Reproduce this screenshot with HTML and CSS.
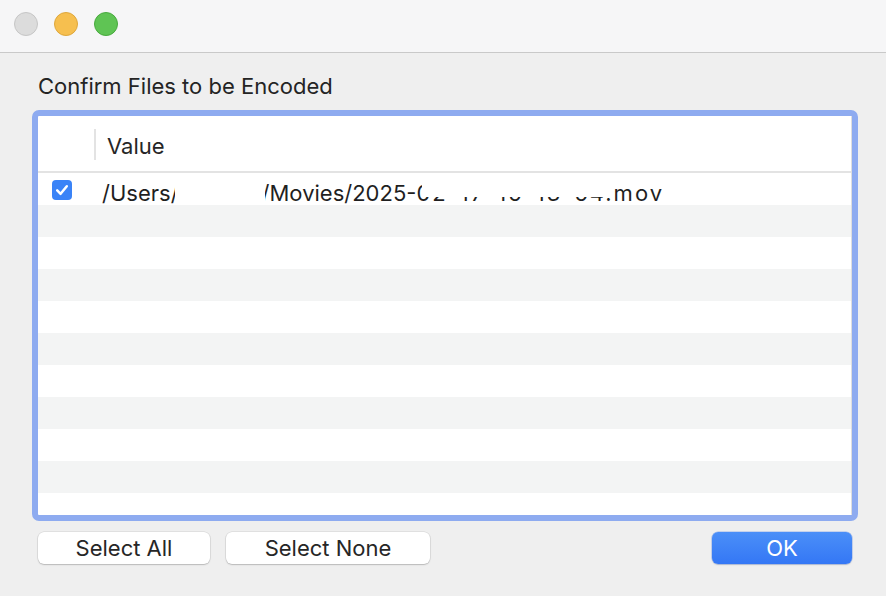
FILE: index.html
```html
<!DOCTYPE html>
<html lang="en">
<head>
<meta charset="utf-8">
<title>Confirm Files to be Encoded</title>
<link rel="stylesheet" href="styles.css">
</head>
<body>
<div class="window">
  <header class="titlebar">
    <span class="light light-close"></span>
    <span class="light light-min"></span>
    <span class="light light-max"></span>
  </header>
  <main class="content">
    <h1 class="heading">Confirm Files to be Encoded</h1>
    <div class="table-frame">
      <div class="table">
        <div class="table-head">
          <div class="head-check"></div>
          <div class="head-value">Value</div>
        </div>
        <div class="rows">
          <div class="row">
            <div class="cell-check">
              <svg class="checkbox" width="20" height="20" viewBox="0 0 20 20">
                <rect x="0" y="0" width="20" height="20" rx="4" fill="#3a83f7"/>
                <path d="M5.2 10.4 L8.6 13.8 L14.8 6.2" fill="none" stroke="#fff" stroke-width="2.5" stroke-linecap="round" stroke-linejoin="round"/>
              </svg>
            </div>
            <div class="cell-value">
              <span class="path">/Users/<span class="user"></span>/Movies/2025-<span class="stamp">02-17-15-13-54</span><span class="ext">.mov</span></span>
              <span class="mask mask-user"></span>
              <span class="mask mask-date"></span>
            </div>
          </div>
          <div class="row"></div>
          <div class="row"></div>
          <div class="row"></div>
          <div class="row"></div>
          <div class="row"></div>
          <div class="row"></div>
          <div class="row"></div>
          <div class="row"></div>
          <div class="row"></div>
          <div class="row"></div>
        </div>
      </div>
    </div>
    <div class="buttons">
      <button class="btn">Select All</button>
      <button class="btn btn-none">Select None</button>
      <button class="btn btn-ok">OK</button>
    </div>
  </main>
</div>
</body>
</html>
```
FILE: styles.css
```css
* { box-sizing: border-box; }
html, body {
  margin: 0;
  padding: 0;
  width: 886px;
  height: 596px;
  overflow: hidden;
  background: #efefef;
  font-family: Inter, "Liberation Sans", sans-serif;
  color: #262626;
}
.window {
  width: 886px;
  height: 596px;
  display: flex;
  flex-direction: column;
}
.titlebar {
  height: 53px;
  background: #f6f6f7;
  border-bottom: 1px solid #c9c9c9;
  display: flex;
  align-items: flex-start;
  gap: 16px;
  padding: 12px 0 0 14px;
  flex: none;
}
.light {
  width: 24px;
  height: 24px;
  border-radius: 50%;
  display: block;
}
.light-close { background: #dcdcdc; border: 1px solid #c6c6c6; }
.light-min { background: #f6bf4f; border: 1px solid #dea73c; }
.light-max { background: #5fc454; border: 1px solid #48aa3e; }
.content {
  flex: 1;
  padding: 0 28px 0 32px;
  display: flex;
  flex-direction: column;
}
.heading {
  margin: 20px 0 0 6px;
  font-size: 22px;
  font-weight: 400;
  line-height: 26px;
  height: 37px;
  color: #242424;
}
.table-frame {
  width: 826px;
  height: 411px;
  border: 6px solid #8eabf0;
  border-radius: 7px;
  background: #fff;
  overflow: hidden;
}
.table {
  height: 100%;
  border-right: 1px solid #dedede;
  display: flex;
  flex-direction: column;
  overflow: hidden;
}
.table-head {
  height: 57px;
  flex: none;
  border-bottom: 2px solid #e3e3e3;
  display: flex;
  align-items: center;
}
.head-check {
  width: 58px;
  height: 31px;
  border-right: 2px solid #e3e3e3;
  margin-top: 2px;
}
.head-value {
  padding-left: 11px;
  font-size: 22px;
  line-height: 26px;
  margin-top: 4px;
}
.rows { flex: 1; overflow: hidden; }
.row {
  height: 32px;
  display: flex;
  overflow: hidden;
}
.row:nth-child(even) { background: #f3f4f4; }
.cell-check {
  width: 64px;
  flex: none;
  padding: 7px 0 0 14px;
  display: flex;
  align-items: flex-start;
}
.cell-value {
  position: relative;
  flex: 1;
  height: 32px;
  overflow: hidden;
}
.path {
  display: block;
  font-size: 22px;
  line-height: 32px;
  padding-top: 4px;
  white-space: nowrap;
  color: #1f1f1f;
}
.stamp { letter-spacing: 2px; }
.ext { letter-spacing: 2px; }
.user { display: inline-block; width: 83px; }
.mask {
  position: absolute;
  background: #fff;
}
.mask-user { left: 73px; width: 90px; top: 0; height: 32px; }
.mask-date { left: 320px; width: 185px; top: 0; height: 24px; }
.buttons {
  margin-top: 11px;
  display: flex;
  align-items: center;
  padding-left: 6px;
}
.btn {
  height: 32px;
  border: none;
  border-radius: 6px;
  background: #fff;
  box-shadow: 0 0 0 0.5px rgba(0,0,0,0.12), 0 1px 1.5px rgba(0,0,0,0.18);
  font-family: inherit;
  font-size: 22px;
  color: #262626;
  padding: 0;
  width: 172px;
}
.btn-none { width: 204px; margin-left: 16px; }
.btn-ok {
  width: 140px;
  margin-left: auto;
  margin-right: 6px;
  color: #fff;
  background: linear-gradient(#4b8ff8, #3477f5);
  box-shadow: 0 0 0 0.5px rgba(40,100,230,0.4), 0 1px 1.5px rgba(0,0,0,0.15);
}
```
